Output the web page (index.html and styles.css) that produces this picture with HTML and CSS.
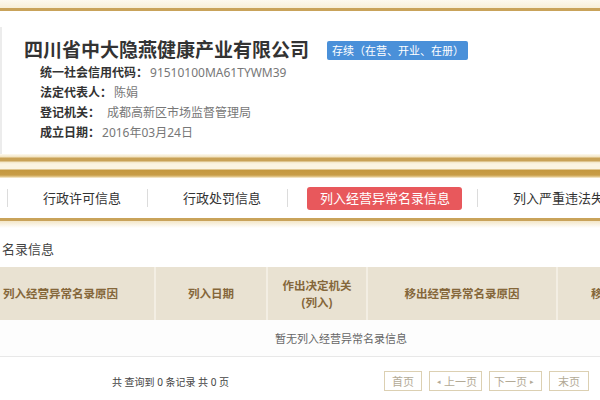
FILE: index.html
```html
<!DOCTYPE html>
<html lang="zh-CN">
<head>
<meta charset="utf-8">
<title>企业信息</title>
<link rel="stylesheet" href="styles.css">
</head>
<body>
<div class="topbar"></div>
<div class="card">
  <div class="title-row">
    <h1 class="title">四川省中大隐燕健康产业有限公司</h1>
    <span class="badge">存续（在营、开业、在册）</span>
  </div>
  <div class="info">
    <div class="row"><span class="label">统一社会信用代码：</span><span class="value">91510100MA61TYWM39</span></div>
    <div class="row"><span class="label">法定代表人：</span><span class="value">陈娟</span></div>
    <div class="row"><span class="label">登记机关：</span><span class="value value-wide">成都高新区市场监督管理局</span></div>
    <div class="row"><span class="label">成立日期：</span><span class="value">2016年03月24日</span></div>
  </div>
</div>
<div class="band"></div>
<nav class="tabs">
  <span class="sep"></span><span class="tab">行政许可信息</span>
  <span class="sep"></span><span class="tab">行政处罚信息</span>
  <span class="sep"></span><span class="tab tab-active"><span class="pill">列入经营异常名录信息</span></span>
  <span class="sep"></span><span class="tab">列入严重违法失信企业名单信息</span>
</nav>
<section class="content">
  <h2 class="section-title">名录信息</h2>
  <table class="grid">
    <colgroup>
      <col class="c1"><col class="c2"><col class="c3"><col class="c4"><col class="c5"><col class="c6">
    </colgroup>
    <thead>
      <tr>
        <th>列入经营异常名录原因</th>
        <th>列入日期</th>
        <th>作出决定机关<br>(列入)</th>
        <th>移出经营异常名录原因</th>
        <th>移出日期</th>
        <th>作出决定机关(移出)</th>
      </tr>
    </thead>
    <tbody>
      <tr><td colspan="6" class="empty">暂无列入经营异常名录信息</td></tr>
    </tbody>
  </table>
  <div class="pager">
    <span class="pager-info">共 查询到 0 条记录 共 0 页</span>
    <div class="pager-btns">
      <span class="pbtn pbtn-s">首页</span>
      <span class="pbtn pbtn-l"><span class="arr">◂</span>上一页</span>
      <span class="pbtn pbtn-l">下一页<span class="arr">▸</span></span>
      <span class="pbtn pbtn-e">末页</span>
    </div>
  </div>
</section>
</body>
</html>
```
FILE: styles.css
```css
html, body {
  margin: 0;
  padding: 0;
  width: 600px;
  height: 400px;
  overflow: hidden;
  background: #fff;
}
body {
  font-family: "Noto Sans", "Noto Sans CJK SC", sans-serif;
  color: #333;
}
.topbar {
  height: 8px;
  background: linear-gradient(#fdf9ef, #f8efd8);
  border-bottom: 3px solid #c9a35a;
}
.card {
  margin-top: 16px;
  height: 127px;
  box-sizing: border-box;
  padding: 10px 0 0 22px;
  border-left: 2px solid #ececec;
}
.title-row {
  display: flex;
  align-items: center;
  height: 26px;
}
.title {
  margin: 0;
  font-size: 19px;
  font-weight: bold;
  line-height: 26px;
  color: #333;
  white-space: nowrap;
}
.badge {
  margin-left: 18px;
  height: 19px;
  line-height: 19px;
  padding: 0 4px 0 5px;
  font-size: 11px;
  background: #4a90d9;
  color: #fff;
  border-radius: 2px;
  white-space: nowrap;
}
.info {
  padding-left: 16px;
}
.row {
  display: flex;
  height: 20px;
  line-height: 20px;
  font-size: 12px;
  white-space: nowrap;
}
.label {
  font-weight: bold;
  color: #333;
}
.value {
  color: #777;
  margin-left: 2px;
}
.value-wide {
  margin-left: 7px;
}
.band {
  height: 24px;
  background: linear-gradient(
    #fdfaf1 0,
    #f2e3bf 3px,
    #c9a256 4px,
    #c9a256 7px,
    #f3e6c6 8px,
    #fbf4e2 10px,
    #fbf4e2 15px,
    #c4983f 16px,
    #c89d48 21px,
    #e6cd95 23px,
    #fbf6ea 24px
  );
}
.tabs {
  display: flex;
  align-items: center;
  height: 40px;
  padding-left: 7px;
  white-space: nowrap;
}
.sep {
  flex: none;
  width: 1px;
  height: 18px;
  background: #dcdcdc;
}
.tab {
  flex: none;
  padding: 0 26px 0 35px;
  font-size: 13px;
  line-height: 18px;
  color: #333;
}
.tab-active {
  padding: 0 15px 0 19px;
}
.pill {
  display: block;
  height: 23px;
  line-height: 23px;
  padding: 0 12px 0 13px;
  background: #e8585c;
  color: #fff;
  border-radius: 3px;
}
.content {
  border-top: 3px solid #c9a35a;
  background: linear-gradient(#f3e6c8, #fff 7px) no-repeat;
}
.section-title {
  margin: 18px 0 8px;
  padding-left: 2px;
  font-size: 13px;
  font-weight: normal;
  line-height: 20px;
  color: #444;
}
.grid {
  margin-left: -33px;
  width: 748px;
  table-layout: fixed;
  border-collapse: collapse;
}
.c1 { width: 188px; }
.c2 { width: 112px; }
.c3 { width: 100px; }
.c4 { width: 190px; }
.c5 { width: 114px; }
.c6 { width: 44px; }
.grid th {
  height: 53px;
  padding: 0;
  background: #e9e2d2;
  border-right: 2px solid #f3eee3;
  color: #85673a;
  font-size: 11.5px;
  font-weight: bold;
  line-height: 17px;
  text-align: center;
  white-space: nowrap;
  overflow: hidden;
}
.grid td.empty {
  height: 36px;
  padding: 0;
  text-align: center;
  font-size: 11px;
  color: #666;
  background: #fdfdfd;
  border-bottom: 1px solid #e8e8e8;
}
.pager {
  display: flex;
  align-items: center;
  height: 20px;
  margin-top: 14px;
  padding: 0 11px 0 112px;
}
.pager-info {
  font-size: 10px;
  color: #444;
  white-space: nowrap;
}
.pager-btns {
  display: flex;
  gap: 7px;
  margin-left: auto;
}
.pbtn {
  display: flex;
  align-items: center;
  justify-content: center;
  box-sizing: border-box;
  height: 20px;
  border: 1px solid #dcd0b2;
  font-size: 11px;
  color: #b3aa96;
  white-space: nowrap;
}
.pbtn-s { width: 38px; }
.pbtn-l { width: 53px; }
.pbtn-e { width: 40px; }
.arr {
  font-size: 7px;
  margin: 0 3px;
}
```
